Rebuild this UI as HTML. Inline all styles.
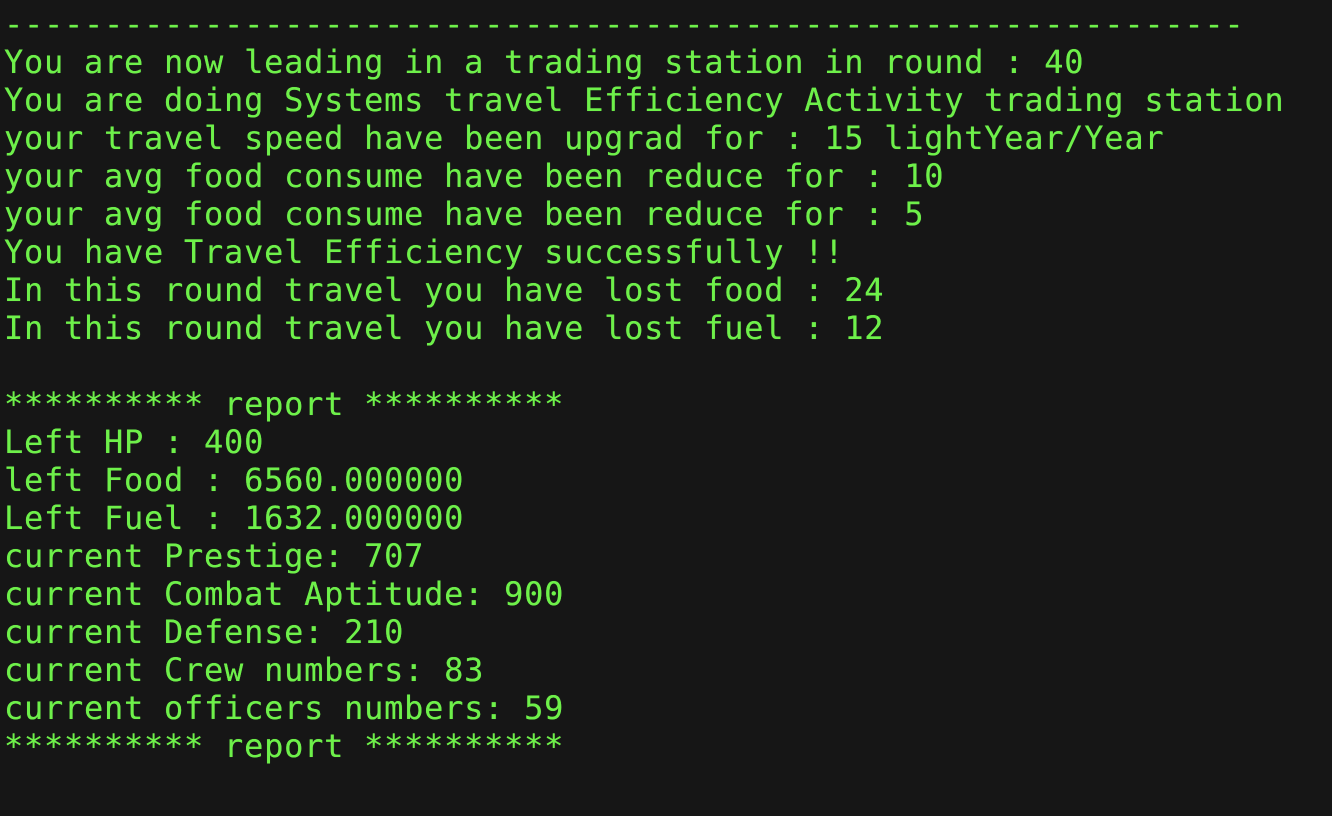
<!DOCTYPE html>
<html><head><meta charset="utf-8"><style>
html,body{margin:0;padding:0;background:#161616;width:1332px;height:816px;overflow:hidden}
pre{margin:0;padding:5px 0 0 4px;font-family:"DejaVu Sans Mono","Liberation Mono",monospace;font-size:32px;line-height:38px;color:#6ef04a;letter-spacing:0.74px;text-shadow:0 0 0.4px #6ef04a}
</style></head><body><pre>--------------------------------------------------------------
You are now leading in a trading station in round : 40
You are doing Systems travel Efficiency Activity trading station
your travel speed have been upgrad for : 15 lightYear/Year
your avg food consume have been reduce for : 10
your avg food consume have been reduce for : 5
You have Travel Efficiency successfully !!
In this round travel you have lost food : 24
In this round travel you have lost fuel : 12

********** report **********
Left HP : 400
left Food : 6560.000000
Left Fuel : 1632.000000
current Prestige: 707
current Combat Aptitude: 900
current Defense: 210
current Crew numbers: 83
current officers numbers: 59
********** report **********
</pre></body></html>
